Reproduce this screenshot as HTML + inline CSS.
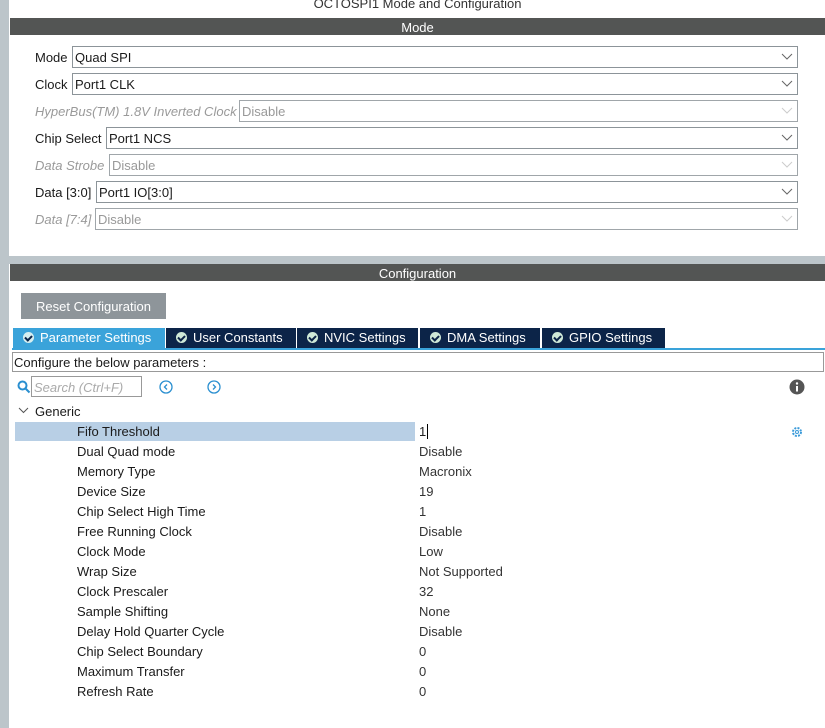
<!DOCTYPE html>
<html><head><style>
*{margin:0;padding:0;box-sizing:border-box}
body{width:825px;height:728px;position:relative;overflow:hidden;background:#fff;font-family:"Liberation Sans",sans-serif;font-size:13px;color:#1a1a1a}
.a{position:absolute}
.bar{position:absolute;left:10px;right:0;height:17px;background:#535554;color:#fff;text-align:center;font-size:13px;line-height:19px}
.lbl{position:absolute;left:35px;line-height:24px;white-space:nowrap}
.dis{color:#9a9a9a;font-style:italic}
.sel{position:absolute;height:22px;right:27px;border:1px solid #8c9499;padding-left:2px;line-height:22px;background:#fff}
.sel.d{color:#999;border-color:#a0a6aa}
.sel svg{position:absolute;right:4px;top:6px}
.tab{position:absolute;top:328px;height:20px;background:#0c2448;color:#fff;line-height:20px;font-size:13px;letter-spacing:0;white-space:nowrap}
.tab i{display:inline-block;width:11px;height:11px;border-radius:50%;background:#cfe9d8;vertical-align:-1px;margin:0 6px 0 10px;position:relative}
.tab i:after{content:"";position:absolute;left:3px;top:2px;width:3px;height:5px;border:solid #0c2448;border-width:0 2px 2px 0;transform:rotate(45deg)}
.r{position:absolute;left:77px;line-height:22px;white-space:nowrap}
.v{position:absolute;left:419px;line-height:22px;white-space:nowrap;color:#333}
</style></head><body>
<div class="a" style="left:0;top:0;width:9px;height:728px;background:#bcc5ca"></div>
<div class="a" style="left:9px;top:256px;width:816px;height:8px;background:#bcc5ca"></div>
<div class="a" style="left:0;top:-4px;width:835px;text-align:center;color:#333;font-size:13px">OCTOSPI1 Mode and Configuration</div>
<div class="bar" style="top:18px">Mode</div>

<div class="lbl" style="top:46px">Mode</div><div class="sel" style="top:46px;left:72px">Quad SPI<svg width="12" height="8"><path d="M1 1l5 5 5-5" fill="none" stroke="#666"/></svg></div>
<div class="lbl" style="top:73px">Clock</div><div class="sel" style="top:73px;left:72px">Port1 CLK<svg width="12" height="8"><path d="M1 1l5 5 5-5" fill="none" stroke="#666"/></svg></div>
<div class="lbl dis" style="top:100px">HyperBus(TM) 1.8V Inverted Clock</div><div class="sel d" style="top:100px;left:239px">Disable<svg width="12" height="8"><path d="M1 1l5 5 5-5" fill="none" stroke="#ccc"/></svg></div>
<div class="lbl" style="top:127px">Chip Select</div><div class="sel" style="top:127px;left:106px">Port1 NCS<svg width="12" height="8"><path d="M1 1l5 5 5-5" fill="none" stroke="#666"/></svg></div>
<div class="lbl dis" style="top:154px">Data Strobe</div><div class="sel d" style="top:154px;left:109px">Disable<svg width="12" height="8"><path d="M1 1l5 5 5-5" fill="none" stroke="#ccc"/></svg></div>
<div class="lbl" style="top:181px">Data [3:0]</div><div class="sel" style="top:181px;left:96px">Port1 IO[3:0]<svg width="12" height="8"><path d="M1 1l5 5 5-5" fill="none" stroke="#666"/></svg></div>
<div class="lbl dis" style="top:208px">Data [7:4]</div><div class="sel d" style="top:208px;left:95px">Disable<svg width="12" height="8"><path d="M1 1l5 5 5-5" fill="none" stroke="#ccc"/></svg></div>

<div class="bar" style="top:264px">Configuration</div>
<div class="a" style="left:21px;top:293px;width:145px;height:26px;background:#8e959a;color:#fff;line-height:27px;text-align:center">Reset Configuration</div>

<div class="tab" style="left:13px;width:152px;background:#3aa3da"><i style="background:#d6eef0"></i>Parameter Settings</div>
<div class="tab" style="left:166px;width:130px"><i></i>User Constants</div>
<div class="tab" style="left:297px;width:121px"><i></i>NVIC Settings</div>
<div class="tab" style="left:420px;width:120px"><i></i>DMA Settings</div>
<div class="tab" style="left:542px;width:123px"><i></i>GPIO Settings</div>
<div class="a" style="left:12px;top:348px;width:813px;height:2px;background:#3aa3da"></div>
<div class="a" style="left:12px;top:352px;width:812px;height:20px;border:1px solid #999;line-height:20px;padding-left:1px">Configure the below parameters :</div>

<svg class="a" style="left:17px;top:380px" width="14" height="14"><circle cx="5.5" cy="5.5" r="4" fill="none" stroke="#2a8fd0" stroke-width="2"/><path d="M8.5 8.5l4 4" stroke="#2a8fd0" stroke-width="2"/></svg>
<div class="a" style="left:31px;top:376px;width:111px;height:21px;border:1px solid #999;color:#aaa;font-style:italic;line-height:21px;padding-left:2px">Search (Ctrl+F)</div>
<svg class="a" style="left:159px;top:380px" width="14" height="14"><circle cx="7" cy="7" r="6" fill="none" stroke="#2a8fd0" stroke-width="1.3"/><path d="M8 4.5L5.5 7 8 9.5" fill="none" stroke="#2a8fd0" stroke-width="1.3"/></svg>
<svg class="a" style="left:207px;top:380px" width="14" height="14"><circle cx="7" cy="7" r="6" fill="none" stroke="#2a8fd0" stroke-width="1.3"/><path d="M6 4.5L8.5 7 6 9.5" fill="none" stroke="#2a8fd0" stroke-width="1.3"/></svg>
<svg class="a" style="left:789px;top:379px" width="16" height="16"><circle cx="8" cy="8" r="7.5" fill="#555"/><rect x="7" y="7" width="2" height="5.5" fill="#fff"/><circle cx="8" cy="4.5" r="1.2" fill="#fff"/></svg>

<svg class="a" style="left:18px;top:407px" width="11" height="8"><path d="M1 1l4.5 4.5L10 1" fill="none" stroke="#555"/></svg>
<div class="a" style="left:35px;top:401px;line-height:22px">Generic</div>
<div class="a" style="left:15px;top:422px;width:400px;height:19px;background:#b8cfe5"></div>
<div class="r" style="top:421px">Fifo Threshold</div><div class="v" style="top:421px;color:#222">1<span style="display:inline-block;width:1px;height:15px;background:#000;vertical-align:-3px;margin-left:1px"></span></div>
<svg class="a" style="left:791px;top:426px" width="12" height="12"><circle cx="6" cy="6" r="4" fill="none" stroke="#3a9ad9" stroke-width="2" stroke-dasharray="2 1.2"/><circle cx="6" cy="6" r="1.5" fill="none" stroke="#3a9ad9"/></svg>
<div class="r" style="top:441px">Dual Quad mode</div><div class="v" style="top:441px">Disable</div>
<div class="r" style="top:461px">Memory Type</div><div class="v" style="top:461px">Macronix</div>
<div class="r" style="top:481px">Device Size</div><div class="v" style="top:481px">19</div>
<div class="r" style="top:501px">Chip Select High Time</div><div class="v" style="top:501px">1</div>
<div class="r" style="top:521px">Free Running Clock</div><div class="v" style="top:521px">Disable</div>
<div class="r" style="top:541px">Clock Mode</div><div class="v" style="top:541px">Low</div>
<div class="r" style="top:561px">Wrap Size</div><div class="v" style="top:561px">Not Supported</div>
<div class="r" style="top:581px">Clock Prescaler</div><div class="v" style="top:581px">32</div>
<div class="r" style="top:601px">Sample Shifting</div><div class="v" style="top:601px">None</div>
<div class="r" style="top:621px">Delay Hold Quarter Cycle</div><div class="v" style="top:621px">Disable</div>
<div class="r" style="top:641px">Chip Select Boundary</div><div class="v" style="top:641px">0</div>
<div class="r" style="top:661px">Maximum Transfer</div><div class="v" style="top:661px">0</div>
<div class="r" style="top:681px">Refresh Rate</div><div class="v" style="top:681px">0</div>
</body></html>
